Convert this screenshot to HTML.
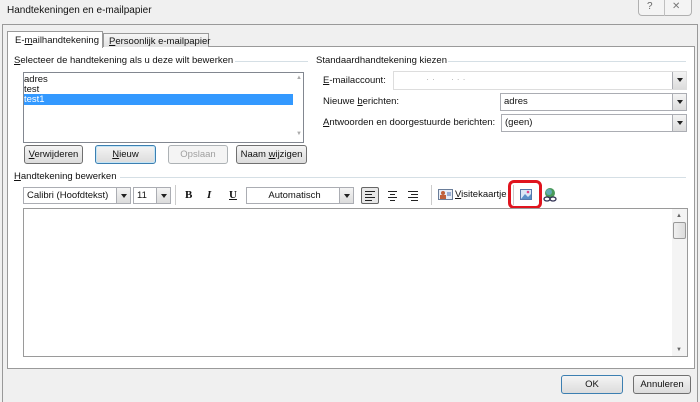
<!DOCTYPE html>
<html><head><meta charset="utf-8"><style>
*{margin:0;padding:0;box-sizing:border-box}
body{width:700px;height:402px;background:#f0f0f0;font-family:"Liberation Sans",sans-serif;font-size:9.5px;color:#111;position:relative;overflow:hidden}
.a{position:absolute;white-space:nowrap}
.btn{position:absolute;border:1px solid #707070;border-radius:3px;background:linear-gradient(#f4f4f4,#dcdcdc);text-align:center;line-height:17px;height:19px}
.cb{position:absolute;background:#fff;border:1px solid #abadb3;height:18px;line-height:16px;padding-left:3px}
.dd{position:absolute;right:0;top:0;width:14px;height:100%;border-left:1px solid #abadb3;background:linear-gradient(#f4f4f4,#dcdcdc)}
.dd:after{content:"";position:absolute;left:4px;top:6px;border-left:3px solid transparent;border-right:3px solid transparent;border-top:4px solid #222}
.gl{position:absolute;height:1px;background:#d5dfe5}
u{text-decoration:underline}
</style></head><body>
<div class="a" style="left:7px;top:5px;font-size:10px">Handtekeningen en e-mailpapier</div>
<div class="a" style="left:638px;top:0;width:54px;height:16px;border:1px solid #b0b0b0;border-top:none;border-radius:0 0 4px 4px;background:#f4f4f4"></div>
<div class="a" style="left:664px;top:0;width:1px;height:16px;background:#c0c0c0"></div>
<div class="a" style="left:647px;top:1px;color:#666;font-size:10px">?</div>
<div class="a" style="left:672px;top:1px;color:#777;font-size:10px">✕</div>
<div class="a" style="left:2px;top:24px;width:696px;height:378px;border-left:1px solid #999;border-top:1px solid #999;border-right:1px solid #999"></div>
<div class="a" style="left:7px;top:46px;width:688px;height:323px;background:#fff;border:1px solid #9a9a9a"></div>
<div class="a" style="left:7px;top:31px;width:96px;height:17px;background:#fff;border:1px solid #9a9a9a;border-bottom:none;padding:3px 0 0 7px">E-<u>m</u>ailhandtekening</div>
<div class="a" style="left:103px;top:33px;width:106px;height:14px;background:linear-gradient(#f6f6f6,#e2e2e2);border:1px solid #9a9a9a;border-bottom:none;padding:2px 0 0 5px"><u>P</u>ersoonlijk e-mailpapier</div>
<div class="a" style="left:14px;top:55px"><u>S</u>electeer de handtekening als u deze wilt bewerken</div>
<div class="gl" style="left:235px;top:61px;width:73px"></div>
<div class="a" style="left:23px;top:72px;width:281px;height:71px;background:#fff;border:1px solid #828790"></div>
<div class="a" style="left:24px;top:74px">adres</div>
<div class="a" style="left:24px;top:84px">test</div>
<div class="a" style="left:24px;top:94px;width:269px;height:11px;background:#3399ff;color:#fff;line-height:11px">test1</div>
<div class="a" style="left:296px;top:75px;color:#aaa;font-size:6px">▲</div>
<div class="a" style="left:296px;top:131px;color:#aaa;font-size:6px">▼</div>
<div class="btn" style="left:24px;top:145px;width:59px"><u>V</u>erwijderen</div>
<div class="btn" style="left:95px;top:145px;width:61px;border-color:#3c7fb1;box-shadow:inset 0 0 0 1px #c4e5f6"><u>N</u>ieuw</div>
<div class="btn" style="left:168px;top:145px;width:60px;color:#a0a0a0;border-color:#adb2b5;background:#f4f4f4">Opslaan</div>
<div class="btn" style="left:236px;top:145px;width:71px">Naam <u>w</u>ijzigen</div>
<div class="a" style="left:316px;top:55px">Standaardhandtekening kiezen</div>
<div class="gl" style="left:448px;top:61px;width:238px"></div>
<div class="a" style="left:323px;top:75px"><u>E</u>-mailaccount:</div>
<div class="cb" style="left:393px;top:71px;width:294px;height:19px;border-color:#ddd"><span style="color:#bbb">&nbsp;&nbsp;&nbsp;&nbsp;&nbsp;&nbsp;&nbsp;&nbsp;&nbsp;&nbsp;&nbsp;· ·&nbsp;&nbsp;&nbsp;&nbsp;&nbsp;&nbsp;· · ·</span><div class="dd"></div></div>
<div class="a" style="left:323px;top:96px">Nieuwe <u>b</u>erichten:</div>
<div class="cb" style="left:500px;top:93px;width:187px">adres<div class="dd"></div></div>
<div class="a" style="left:323px;top:117px"><u>A</u>ntwoorden en doorgestuurde berichten:</div>
<div class="cb" style="left:501px;top:114px;width:186px">(geen)<div class="dd"></div></div>
<div class="a" style="left:14px;top:171px"><u>H</u>andtekening bewerken</div>
<div class="gl" style="left:120px;top:177px;width:566px"></div>
<div class="cb" style="left:23px;top:187px;width:108px;height:17px;line-height:15px">Calibri (Hoofdtekst)<div class="dd"></div></div>
<div class="cb" style="left:133px;top:187px;width:38px;height:17px;line-height:15px">11<div class="dd"></div></div>
<div class="a" style="left:175px;top:185px;width:1px;height:20px;background:#ccc"></div>
<div class="a" style="left:185px;top:189px;font-family:'Liberation Serif',serif;font-weight:bold;font-size:11px">B</div>
<div class="a" style="left:207px;top:189px;font-family:'Liberation Serif',serif;font-style:italic;font-weight:bold;font-size:11px">I</div>
<div class="a" style="left:229px;top:189px;font-family:'Liberation Serif',serif;font-weight:bold;font-size:11px;text-decoration:underline">U</div>
<div class="cb" style="left:246px;top:187px;width:108px;height:17px;line-height:15px;text-align:center;padding-right:14px">Automatisch<div class="dd"></div></div>
<div class="a" style="left:361px;top:187px;width:18px;height:17px;border:1px solid #666;border-radius:2px;background:#e8e8e8"></div>
<svg class="a" style="left:364px;top:190px" width="60" height="12"><g stroke="#222" stroke-width="1"><path d="M1 1.5h10M1 4.5h7M1 7.5h10M1 10.5h7"/><path d="M24 1.5h9M26 4.5h5M24 7.5h9M26 10.5h5"/><path d="M44 1.5h10M47 4.5h7M44 7.5h10M47 10.5h7"/></g></svg>
<div class="a" style="left:431px;top:185px;width:1px;height:20px;background:#ccc"></div>
<svg class="a" style="left:438px;top:189px" width="16" height="12"><rect x=".5" y=".5" width="14" height="10" fill="#e8eef7" stroke="#6a7d99"/><circle cx="5" cy="4" r="2" fill="#c0603a"/><rect x="2" y="6" width="6" height="4" fill="#c0603a"/><path d="M9 4h4M9 6h4" stroke="#4a6fb0"/></svg>
<div class="a" style="left:455px;top:189px"><u>V</u>isitekaartje</div>
<div class="a" style="left:513px;top:185px;width:1px;height:20px;background:#ccc"></div>
<div class="a" style="left:508px;top:180px;width:34px;height:29px;border:3px solid #e0141e;border-radius:6px"></div>
<svg class="a" style="left:520px;top:189px" width="13" height="12"><rect x=".5" y=".5" width="11" height="10" fill="#dbe7f5" stroke="#5577aa"/><path d="M1 10l4-5 3 3 3-3v5z" fill="#5a8fc8"/><circle cx="8" cy="3" r="1.3" fill="#d48"/></svg>
<svg class="a" style="left:543px;top:187px" width="14" height="16"><circle cx="7" cy="6" r="5" fill="#4a9a5a"/><circle cx="6" cy="5" r="3" fill="#6ab4d8" opacity=".7"/><ellipse cx="4" cy="12" rx="3" ry="2" fill="none" stroke="#335" stroke-width="1.3"/><ellipse cx="10" cy="12" rx="3" ry="2" fill="none" stroke="#335" stroke-width="1.3"/></svg>
<div class="a" style="left:23px;top:208px;width:665px;height:149px;background:#fff;border:1px solid #9a9a9a"></div>
<div class="a" style="left:672px;top:209px;width:15px;height:147px;background:#f4f4f4"></div>
<div class="a" style="left:676px;top:213px;color:#666;font-size:6px">▲</div>
<div class="a" style="left:673px;top:222px;width:13px;height:17px;border:1px solid #999;border-radius:2px;background:linear-gradient(90deg,#f0f0f0,#dcdcdc)"></div>
<div class="a" style="left:676px;top:347px;color:#666;font-size:6px">▼</div>
<div class="btn" style="left:561px;top:375px;width:62px;border-color:#3c7fb1">OK</div>
<div class="btn" style="left:633px;top:375px;width:58px">Annuleren</div>
</body></html>
